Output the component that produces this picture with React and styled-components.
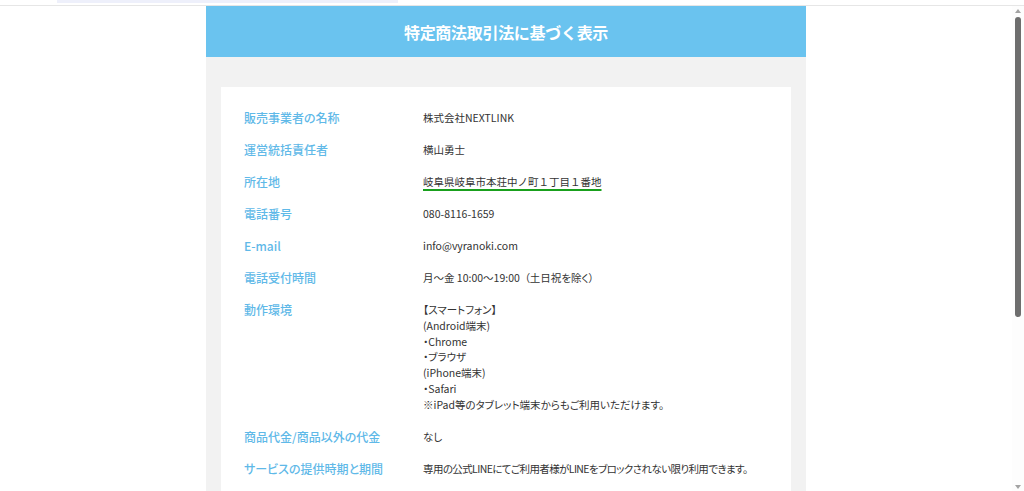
import React from 'react'
import styled, { createGlobalStyle } from 'styled-components'

const GlobalStyle = createGlobalStyle`
    html, body {
        margin: 0;
        padding: 0;
        background: #ffffff;
        overflow: hidden;
    }
    body {
        font-family: "Noto Sans CJK JP", "Noto Sans", sans-serif;
    }
`
const Page = styled.div`
    width: 1024px;
    height: 491px;
    display: flex;
    flex-direction: column;
    overflow: hidden;
`
const TopBar = styled.div`
    height: 5px;
    flex-shrink: 0;
    border-bottom: 1px solid #e6e6e6;
    padding-left: 57px;
`
const TopStrip = styled.div`
    width: 341px;
    height: 3px;
    background: #eef0fb;
`
const Body = styled.div`
    flex: 1;
    display: flex;
    min-height: 0;
`
const Main = styled.div`
    flex: 1;
    display: flex;
    justify-content: center;
    overflow: hidden;
`
const Column = styled.div`
    width: 600px;
    display: flex;
    flex-direction: column;
`
const Header = styled.h1`
    margin: 0;
    height: 51px;
    flex-shrink: 0;
    background: #6ac3ef;
    color: #ffffff;
    font-size: 16px;
    font-weight: bold;
    display: flex;
    justify-content: center;
    align-items: center;
    letter-spacing: -0.3px;
`
const GrayArea = styled.div`
    flex: 1;
    background: #f2f2f2;
    padding: 30px 15px 0;
`
const Card = styled.dl`
    margin: 0;
    background: #ffffff;
    min-height: 100%;
    padding: 15px 23px 0;
`
const Row = styled.div`
    display: flex;
    padding: 8px 0;
`
const Label = styled.dt`
    width: 179px;
    flex-shrink: 0;
    color: #5fb9e8;
    font-size: 12px;
    line-height: 16px;
    font-weight: 500;
    font-feature-settings: "palt";
`
const Value = styled.dd`
    margin: 0;
    color: #333333;
    font-size: 10.5px;
    line-height: 15.8px;
    white-space: nowrap;
    font-feature-settings: "palt";
    letter-spacing: ${(props) => props.tight ? '-0.6px' : '0'};
`
const Address = styled.span`
    font-feature-settings: normal;
    text-decoration: underline;
    text-decoration-color: #19a01d;
    text-decoration-thickness: 2px;
    text-underline-offset: 3px;
`
const Scrollbar = styled.div`
    width: 12px;
    flex-shrink: 0;
    background: #fdfdfd;
    display: flex;
    flex-direction: column;
    align-items: center;
    padding: 3px 0 2px;
`
const Arrow = styled.div`
    width: 0;
    height: 0;
    border-left: 3.5px solid transparent;
    border-right: 3.5px solid transparent;
    ${(props) => props.down
        ? 'border-top: 4px solid #a3a3a3;'
        : 'border-bottom: 4px solid #a3a3a3;'}
`
const Track = styled.div`
    flex: 1;
    width: 100%;
    padding: 4px 0;
    display: flex;
    justify-content: center;
`
const Thumb = styled.div`
    width: 6px;
    height: 300px;
    border-radius: 3px;
    background: #6e6e6e;
`

const rows = [
    { label: '販売事業者の名称', value: ['株式会社NEXTLINK'] },
    { label: '運営統括責任者', value: ['横山勇士'] },
    { label: '所在地', value: ['岐阜県岐阜市本荘中ノ町１丁目１番地'], underline: true },
    { label: '電話番号', value: ['080-8116-1659'] },
    { label: 'E-mail', value: ['info@vyranoki.com'] },
    { label: '電話受付時間', value: ['月～金 10:00～19:00 \u00a0（土日祝を除く）'] },
    {
        label: '動作環境',
        value: [
            '【スマートフォン】',
            '(Android端末)',
            '・Chrome',
            '・ブラウザ',
            '(iPhone端末)',
            '・Safari',
            '※iPad等のタブレット端末からもご利用いただけます。',
        ],
    },
    { label: '商品代金/商品以外の代金', value: ['なし'] },
    { label: 'サービスの提供時期と期間', value: ['専用の公式LINEにてご利用者様がLINEをブロックされない限り利用できます。'], tight: true },
]

function App() {
    return (
        <>
            <GlobalStyle />
            <Page>
                <TopBar>
                    <TopStrip />
                </TopBar>
                <Body>
                    <Main>
                        <Column>
                            <Header>特定商法取引法に基づく表示</Header>
                            <GrayArea>
                                <Card>
                                    {rows.map((r) => (
                                        <Row key={r.label}>
                                            <Label>{r.label}</Label>
                                            <Value tight={r.tight}>
                                                {r.value.map((line, i) => (
                                                    <div key={i}>
                                                        {r.underline ? <Address>{line}</Address> : line}
                                                    </div>
                                                ))}
                                            </Value>
                                        </Row>
                                    ))}
                                </Card>
                            </GrayArea>
                        </Column>
                    </Main>
                    <Scrollbar>
                        <Arrow />
                        <Track>
                            <Thumb />
                        </Track>
                        <Arrow down />
                    </Scrollbar>
                </Body>
            </Page>
        </>
    )
}

export default App
